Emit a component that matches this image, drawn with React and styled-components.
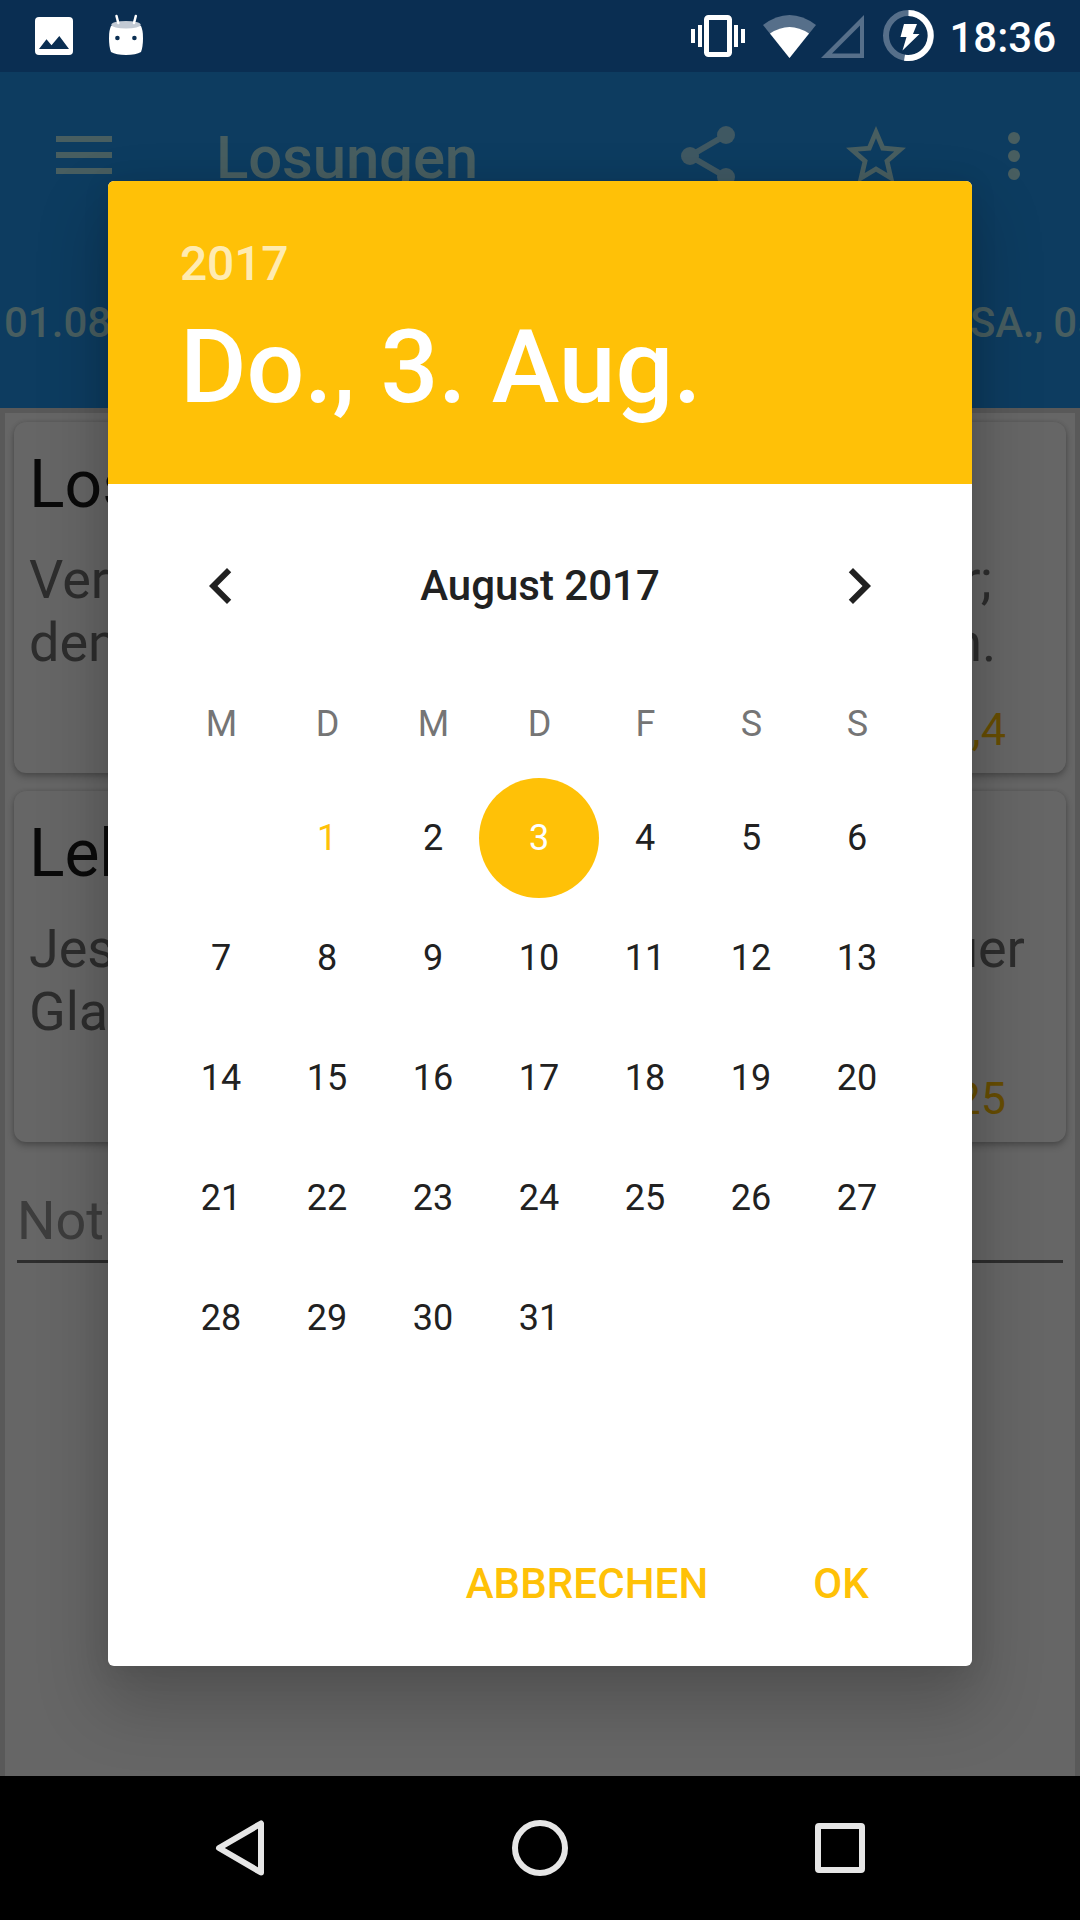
import React from "react";
import styled, { createGlobalStyle } from "styled-components";

const AMBER = "#ffc107";
const DIMMED = "#485e60";

const GlobalStyle = createGlobalStyle`
  * { box-sizing: border-box; }
  body { margin: 0; background: #000; }
`;

const Screen = styled.div`
  position: relative;
  display: flex;
  flex-direction: column;
  width: 1080px;
  height: 1920px;
  overflow: hidden;
  font-family: Roboto, "Liberation Sans", sans-serif;
`;

const StatusBar = styled.header`
  display: flex;
  align-items: center;
  justify-content: space-between;
  flex: none;
  height: 72px;
  padding: 0 24px 0 35px;
  background: #0a2e52;
`;

const StatusGroup = styled.div`
  display: flex;
  align-items: center;
  height: 72px;
`;

const Clock = styled.span`
  margin-left: 14px;
  padding-top: 3px;
  font-size: 42px;
  line-height: 50px;
  font-weight: 500;
  color: #fff;
`;

const Glyph = styled.svg`
  display: block;
  flex: none;
  margin-left: ${(p) => p.$gap || 0}px;
`;

const AppBar = styled.div`
  flex: none;
  height: 336px;
  background: #0d3c60;
  color: ${DIMMED};
`;

const Toolbar = styled.div`
  display: flex;
  align-items: center;
  height: 168px;
  padding: 0 36px 0 56px;
`;

const Title = styled.h1`
  flex: 1;
  margin: 4px 0 0 104px;
  font-size: 60px;
  line-height: 72px;
  font-weight: 500;
  letter-spacing: -0.2px;
`;

const Tabs = styled.nav`
  display: flex;
  justify-content: space-between;
  height: 168px;
  padding: 58px 0 0 4px;
`;

const Tab = styled.span`
  width: ${(p) => p.$width}px;
  height: 50px;
  overflow: hidden;
  white-space: nowrap;
  font-size: 42px;
  line-height: 50px;
  font-weight: 500;
  letter-spacing: ${(p) => p.$tracking || 0}px;
`;

const Content = styled.main`
  display: flex;
  flex-direction: column;
  gap: 18px;
  flex: 1;
  border: solid #595959;
  border-width: 5px 5px 0;
  background: #666;
  padding: 9px 9px 0;
`;

const Card = styled.article`
  height: 351px;
  padding: 24px 15px 0;
  border-radius: 12px;
  background: #666;
  box-shadow: 0 4px 7px rgba(0, 0, 0, 0.24), 0 0 4px rgba(0, 0, 0, 0.13);
`;

const CardTitle = styled.h2`
  margin: 0 0 24px;
  font-size: 66px;
  line-height: 78px;
  font-weight: 400;
  color: #0a0a0a;
`;

const Verse = styled.p`
  margin: 0;
  font-size: 54px;
  line-height: 63px;
  letter-spacing: -0.04px;
  color: #2d2d2d;
  white-space: pre-line;
`;

const Reference = styled.p`
  margin: 29px 45px 0 0;
  font-size: 45px;
  line-height: 54px;
  text-align: right;
  color: #664d03;
`;

const NoteField = styled.div`
  height: 74px;
  margin: 29px 3px 0;
  border-bottom: 3px solid #2d2d2d;
  font-size: 54px;
  line-height: 63px;
  color: #3d3d3d;
`;

const NavBar = styled.footer`
  display: flex;
  flex: none;
  justify-content: center;
  align-items: center;
  gap: 228px;
  height: 144px;
  background: #000;
`;

const Dialog = styled.section`
  position: absolute;
  top: 181px;
  left: 108px;
  display: flex;
  flex-direction: column;
  width: 864px;
  height: 1485px;
  overflow: hidden;
  border-radius: 6px;
  background: #fff;
  color: #212121;
  box-shadow: 0 34px 66px 8px rgba(0, 0, 0, 0.19), 0 2px 28px rgba(0, 0, 0, 0.09);
`;

const DateHeader = styled.div`
  display: flex;
  flex-direction: column;
  gap: 15px;
  flex: none;
  height: 303px;
  padding: 55px 72px 0;
  background: ${AMBER};
  color: #fff;
  font-weight: 500;
`;

const Year = styled.span`
  font-size: 48px;
  line-height: 56px;
  letter-spacing: -0.2px;
  color: rgba(255, 255, 255, 0.7);
`;

const SelectedDate = styled.span`
  font-size: 102px;
  line-height: 120px;
  letter-spacing: -0.1px;
  white-space: nowrap;
`;

const MonthRow = styled.div`
  display: flex;
  align-items: center;
  justify-content: space-between;
  height: 72px;
  margin: 66px 77px 81px;
  font-size: 42px;
  line-height: 50px;
  font-weight: 500;
`;

const Week = styled.div`
  display: grid;
  grid-template-columns: repeat(7, 106px);
  margin-left: 60px;
  font-size: 36px;
  line-height: 42px;
  text-align: center;
`;

const Weekdays = styled(Week)`
  margin-bottom: 33px;
  padding-left: 0.5px;
  color: #757575;
`;

const Day = styled.span`
  display: flex;
  align-items: center;
  justify-content: center;
  height: 120px;
  margin: ${(p) => (p.$selected ? "0 -7px" : "0")};
  border-radius: 60px;
  background: ${(p) => (p.$selected ? AMBER : "transparent")};
  color: ${(p) => (p.$selected ? "#fff" : p.$today ? AMBER : "#212121")};
`;

const Actions = styled.div`
  display: flex;
  justify-content: flex-end;
  gap: 105px;
  margin: auto 103px 57px 0;
`;

const Action = styled.button`
  padding: 0;
  border: 0;
  background: none;
  font: 500 42px/50px Roboto, "Liberation Sans", sans-serif;
  letter-spacing: 0.1px;
  color: ${AMBER};
`;

const verses = [
  {
    title: "Losung",
    text: "Verlasst euch auf den HERRN immerdar;\ndenn Gott der HERR ist ein Fels ewiglich.",
    source: "Jesaja 26,4",
  },
  {
    title: "Lehrtext",
    text: "Jesus sprach zu den Jüngern: Wo ist euer\nGlaube?",
    source: "Lukas 8,25",
  },
];

const weekdays = ["M", "D", "M", "D", "F", "S", "S"];
const days = [null, ...Array.from({ length: 31 }, (_, i) => i + 1)];

function StatusIcons() {
  return (
    <>
      <Glyph width="54" height="42" viewBox="691 15 54 42" fill="#fff">
        <path d="M691 29h4v14h-4zM698 25h4v22h-4zM734 25h4v22h-4zM741 29h4v14h-4z" />
        <rect x="706.5" y="17.5" width="23" height="37" rx="2" fill="none" stroke="#fff" strokeWidth="5" />
      </Glyph>
      <Glyph $gap={18} width="53" height="43" viewBox="763 14 53 43">
        <path d="M763 24 Q789.500 4 816 24 L789.500 57Z" fill="#566f8a" />
        <path d="M770 32.500 Q789.500 19.500 809 32.500 L789.500 57Z" fill="#fff" />
      </Glyph>
      <Glyph $gap={5} width="43" height="43" viewBox="821 14 43 43">
        <path d="M864 14V57H821ZM860 24.500L832 52.500H860Z" fill="#566f8a" fillRule="evenodd" />
      </Glyph>
      <Glyph $gap={19} width="52" height="52" viewBox="883 10 52 52" fill="none" strokeWidth="6">
        <circle cx="908.500" cy="35.500" r="22.500" stroke="#566f8a" />
        <path d="M908.500 13a22.500 22.500 0 1 1-4 44.700" stroke="#fff" />
        <path d="M904 24h13l-4 10h6.500l-17 16.500 4-13.500h-6z" fill="#fff" />
      </Glyph>
    </>
  );
}

function Chevron({ d }) {
  return (
    <Glyph width="72" height="72" viewBox="0 0 24 24" fill="#212121">
      <path d={d} />
    </Glyph>
  );
}

export default function App() {
  return (
    <Screen>
      <GlobalStyle />
      <StatusBar>
        <StatusGroup>
          <Glyph width="38" height="38" viewBox="0 0 38 38">
            <rect width="38" height="38" rx="4" fill="#fff" />
            <path d="M4 32L11.500 22.300 16.500 28.300 24.300 19 34 32Z" fill="#0a2e52" />
          </Glyph>
          <Glyph $gap={35} width="36" height="48" viewBox="108 10 36 48">
            <path d="M111 24Q126 16 141 24 143 28 143 36 143 45 141 50 136 53 126 53 116 53 111 50 109 45 109 36 109 28 111 24Z" fill="#fff" />
            <ellipse cx="126" cy="22.700" rx="14.700" ry="3.800" fill="#c2cad4" />
            <path d="M116.500 14L118.300 21M135.800 14L134 21" stroke="#fff" strokeWidth="2.500" strokeLinecap="round" />
            <circle cx="117.400" cy="36" r="2.300" fill="#0a2e52" />
            <circle cx="134.400" cy="36" r="2.300" fill="#0a2e52" />
          </Glyph>
        </StatusGroup>
        <StatusGroup>
          <StatusIcons />
          <Clock>18:36</Clock>
        </StatusGroup>
      </StatusBar>

      <AppBar>
        <Toolbar>
          <Glyph width="56" height="40" viewBox="0 0 56 40" fill={DIMMED}>
            <path d="M0 0h56v6H0zM0 16h56v6H0zM0 32h56v6H0z" />
          </Glyph>
          <Title>Losungen</Title>
          <Glyph width="54" height="60" viewBox="681 126 54 60" fill="#3f5862">
            <path d="M726 135L690 156 726 177" fill="none" stroke="#3f5862" strokeWidth="6" />
            <circle cx="726" cy="135" r="9" />
            <circle cx="690" cy="156" r="9" />
            <circle cx="726" cy="177" r="9" />
          </Glyph>
          <Glyph $gap={105} width="72" height="72" viewBox="0 0 24 24" fill={DIMMED}>
            <path d="M22 9.240l-7.190-.62L12 2 9.190 8.630 2 9.240l5.460 4.730L5.820 21 12 17.270 18.180 21l-1.630-7.030L22 9.240zM12 15.400l-3.760 2.270 1-4.280-3.320-2.880 4.380-.38L12 6.100l1.710 4.040 4.380.38-3.320 2.880 1 4.280L12 15.400z" />
          </Glyph>
          <Glyph $gap={72} width="60" height="72" viewBox="984 120 60 72" fill={DIMMED}>
            <circle cx="1014" cy="138" r="6" />
            <circle cx="1014" cy="156" r="6" />
            <circle cx="1014" cy="174" r="6" />
          </Glyph>
        </Toolbar>
        <Tabs>
          <Tab $width={240}>01.08.2017</Tab>
          <Tab $width={110} $tracking={-0.3}>SA., 05.08.2017</Tab>
        </Tabs>
      </AppBar>

      <Content>
        {verses.map((v) => (
          <Card key={v.title}>
            <CardTitle>{v.title}</CardTitle>
            <Verse>{v.text}</Verse>
            <Reference>{v.source}</Reference>
          </Card>
        ))}
        <NoteField>Notizen</NoteField>
      </Content>

      <NavBar>
        <Glyph width="72" height="72" viewBox="204 1812 72 72" fill="none" stroke="#e6e6e6" strokeWidth="6" strokeLinejoin="round">
          <path d="M261 1823.500V1872.500L219 1848Z" />
        </Glyph>
        <Glyph width="72" height="72" viewBox="504 1812 72 72" fill="none" stroke="#e6e6e6" strokeWidth="6">
          <circle cx="540" cy="1848" r="25" />
        </Glyph>
        <Glyph width="72" height="72" viewBox="804 1812 72 72" fill="none" stroke="#e6e6e6" strokeWidth="6" strokeLinejoin="round">
          <rect x="818" y="1826" width="44" height="44" rx="1" />
        </Glyph>
      </NavBar>

      <Dialog>
        <DateHeader>
          <Year>2017</Year>
          <SelectedDate>Do., 3. Aug.</SelectedDate>
        </DateHeader>
        <MonthRow>
          <Chevron d="M15.410 7.410L14 6l-6 6 6 6 1.410-1.410L10.830 12z" />
          <span>August 2017</span>
          <Chevron d="M10 6L8.590 7.410 13.170 12l-4.580 4.590L10 18l6-6z" />
        </MonthRow>
        <Weekdays>
          {weekdays.map((d, i) => (
            <span key={i}>{d}</span>
          ))}
        </Weekdays>
        <Week>
          {days.map((d, i) => (
            <Day key={i} $today={d === 1} $selected={d === 3}>
              {d}
            </Day>
          ))}
        </Week>
        <Actions>
          <Action>ABBRECHEN</Action>
          <Action>OK</Action>
        </Actions>
      </Dialog>
    </Screen>
  );
}
